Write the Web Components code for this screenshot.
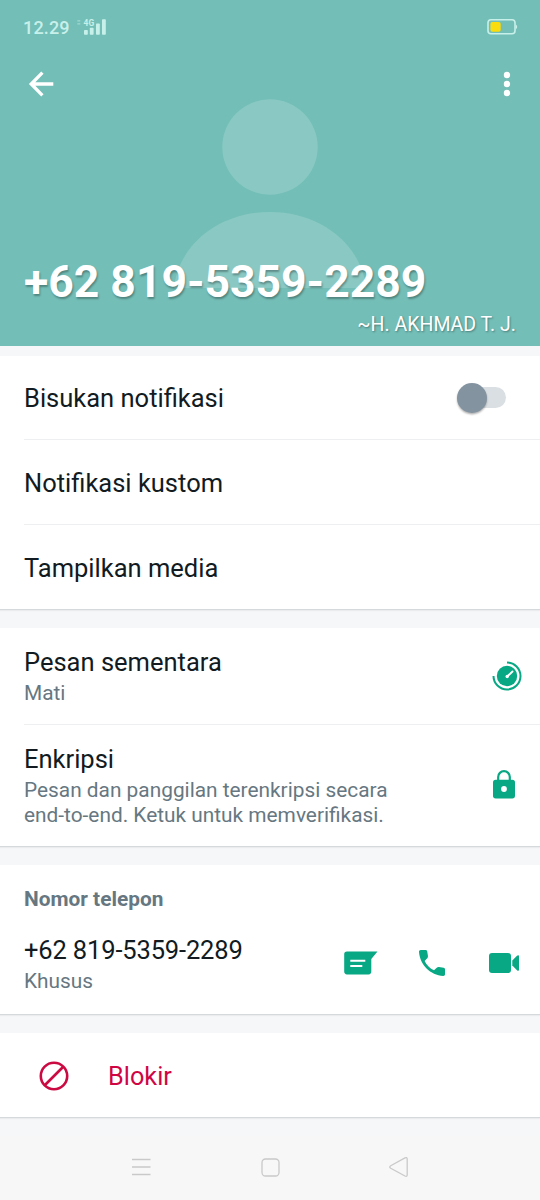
<!DOCTYPE html>
<html lang="id">
<head>
<meta charset="utf-8">
<title>Info kontak</title>
<style>
body{margin:0;background:#f6f7f9;font-family:Roboto,"Liberation Sans",sans-serif;color:#111b21}
</style>
</head>
<body>
<contact-screen></contact-screen>
<script>
const define = (name, css, html) => customElements.define(name, class extends HTMLElement {
  constructor() {
    super();
    this.attachShadow({mode: 'open'}).innerHTML = `<style>*{box-sizing:border-box}svg{display:block;overflow:visible}${css}</style>${html}`;
  }
});

define('status-bar', `
:host{display:flex;height:54px;padding:0 22px 0 23px;align-items:center;color:#c8f0ea}
.time{font-size:18px;font-weight:500;line-height:22px;letter-spacing:.15px;width:54px;padding-top:1px}
.net{flex:1}`,
`<span class="time">12.29</span>
<svg class="net" width="30" height="20" viewBox="0 0 30 20" preserveAspectRatio="xMinYMid meet" fill="#c8f0ea">
<g opacity=".4"><rect x=".3" y="3" width="3" height="1.600"/><rect x=".3" y="6" width="3" height="1.600"/></g>
<rect x="7" y="13" width="3.800" height="4.700" rx=".8"/><rect x="12.800" y="10.800" width="3.800" height="6.900" rx=".8"/><rect x="19" y="6.500" width="3.800" height="11.200" rx=".8"/><rect x="25" y="2.300" width="3.800" height="15.400" rx=".8"/>
<text x="6.600" y="8.800" font-size="8.500" font-weight="700" textLength="10.500" lengthAdjust="spacingAndGlyphs">4G</text></svg>
<svg width="31" height="16" viewBox="0 0 31 16"><rect x="1" y=".8" width="27" height="14" rx="3" fill="none" stroke="#c8f0ea" stroke-width="1.600"/><path d="M28.700 5.300q3 2.700 0 5.200z" fill="#c8f0ea"/><rect x="3.400" y="3" width="10.300" height="9.800" rx="2" fill="#fbdc0c"/></svg>`);

define('contact-header', `
:host{display:grid;flex:none;height:346px;background:#73beb7;color:#fff;overflow:hidden}
.avatar,.content{grid-area:1/1}
.content{display:flex;flex-direction:column;z-index:1}
.bar{display:flex;justify-content:space-between;padding:17px 29px 0 29px;height:60px}
.grow{flex:1}
h1{margin:0 0 0 24px;font-size:44.500px;line-height:54px;font-weight:700;text-shadow:1px 1.500px 2px rgba(0,0,0,.3);white-space:nowrap}
p{margin:4px 24px 9px;text-align:right;font-size:19.500px;line-height:24px;text-shadow:1px 1px 2px rgba(0,0,0,.35)}`,
`<svg class="avatar" width="540" height="346" viewBox="0 0 540 346" fill="#8ac9c3"><circle cx="270" cy="147" r="47.700"/><path d="M174 288C178 246 218 212 270 212S362 246 366 288Z"/></svg>
<div class="content"><status-bar></status-bar>
<div class="bar">
<svg width="25" height="26" viewBox="0 0 25 26" fill="none" stroke="#fff" stroke-width="3.300"><path d="M24.300 13H3M13.400 1.700L2.200 13l11.200 11.300"/></svg>
<svg width="8" height="26" viewBox="0 0 8 26" fill="#fff"><circle cx="4" cy="4" r="3.200"/><circle cx="4" cy="13" r="3.200"/><circle cx="4" cy="22" r="3.200"/></svg></div>
<div class="grow"></div><h1>+62 819-5359-2289</h1><p>~H. AKHMAD T. J.</p></div>`);

define('info-card', `
:host{display:block;flex:none;background:#fff;border-bottom:1px solid #d6d9dc;box-shadow:0 1px 1px #eaecee;margin-bottom:18px}`, `<slot></slot>`);

define('info-row', `
:host{display:flex;box-sizing:border-box;align-items:center;height:var(--h,84px);margin-left:24px;padding:0 var(--pr,17px) var(--pb,0px) 0;border-bottom:var(--line,0) solid #eeeff0}
.text{flex:1;padding-top:var(--shift,1px)}
.title{font-size:25.500px;line-height:30px;white-space:nowrap;letter-spacing:var(--track,0)}
::slotted([slot=sub]){display:block;font-size:20.850px;line-height:25px;color:#667781;margin-top:4px;white-space:nowrap}`,
`<div class="text"><div class="title"><slot></slot></div><slot name="sub"></slot></div><slot name="end"></slot>`);

define('toggle-switch', `
:host{display:flex;align-items:center;width:50px;height:32px;margin-right:16px}
.track{width:42px;height:21px;border-radius:11px;background:#d9dfe3;margin-left:7px;display:flex;align-items:center}
.thumb{flex:none;width:30px;height:30px;margin-left:-7px;border-radius:50%;background:#8493a0;box-shadow:0 1.500px 2px rgba(0,0,0,.3)}`,
`<div class="track"><div class="thumb"></div></div>`);

const icons = {
timer: `<svg width="30" height="30" viewBox="0 0 30 30"><path d="M15 1.500A13.500 13.500 0 1 1 1.500 15" fill="none" stroke="#08a884" stroke-width="2"/><circle cx="15" cy="15" r="10.200" fill="#08a884"/><path d="M15.500 15.200L20.500 10.500" stroke="#fff" stroke-width="1.900" stroke-linecap="round"/><circle cx="15.200" cy="15.500" r="1.700" fill="#fff"/></svg>`,
lock: `<svg width="22" height="29" viewBox="0 0 22 29"><path d="M5.200 11V7a5.800 5.800 0 0 1 11.600 0v4" fill="none" stroke="#08a884" stroke-width="2.200"/><rect y="9.800" width="22" height="18.700" rx="2.700" fill="#08a884"/><circle cx="11" cy="19" r="2.900" fill="#fff"/></svg>`,
chat: `<svg width="34" height="24" viewBox="0 0 34 24"><path d="M3 .5H33.500L27.300 8V20.600a2.800 2.800 0 0 1-2.800 2.800H3A2.800 2.800 0 0 1 .2 20.600V3.300A2.800 2.800 0 0 1 3 .5Z" fill="#08a884"/><path d="M6.300 9.700H21.300M6.300 15H18.300" stroke="#fff" stroke-width="2"/></svg>`,
call: `<svg width="26" height="26" viewBox="3 3 18 18"><path d="M20 15.300l-3.200-.5c-.6-.1-1.100.1-1.500.5l-1.900 1.800c-2.800-1.400-5.100-3.700-6.500-6.500l1.800-1.900c.4-.4.600-.9.500-1.500L8.700 4c-.1-.6-.6-1-1.200-1H4.200C3.500 3 3 3.500 3 4.200 3.600 13.200 10.800 20.400 19.800 21c.7 0 1.200-.5 1.200-1.200v-3.300c0-.6-.4-1.100-1-1.200z" fill="#08a884"/></svg>`,
video: `<svg width="30" height="20" viewBox="0 0 30 20" fill="#08a884"><rect width="22" height="20" rx="3"/><path d="M23.300 7.600L28 2.800c1-1 2-.6 2 .7v13c0 1.300-1 1.700-2 .7l-4.700-4.800z"/></svg>`,
block: `<svg width="30" height="30" viewBox="0 0 30 30" fill="none" stroke="#cb0a42" stroke-width="2.600"><circle cx="15" cy="15" r="13.200"/><path d="M5.500 24.500L24.500 5.500"/></svg>`
};
customElements.define('app-icon', class extends HTMLElement {
  constructor() {
    super();
    this.attachShadow({mode: 'open'}).innerHTML = `<style>:host{display:block}svg{display:block}</style>${icons[this.getAttribute('name')] || ''}`;
  }
});

define('section-label', `:host{display:block;box-sizing:border-box;height:45px;padding:22px 24px 0;font-size:20.850px;line-height:24px;font-weight:700;color:#667781}`, `<slot></slot>`);

define('phone-actions', `:host{display:flex;align-items:center;width:176px;padding-top:1px}
.call{margin-left:41px}.video{margin-left:44px}`,
`<app-icon name="chat"></app-icon><app-icon class="call" name="call"></app-icon><app-icon class="video" name="video"></app-icon>`);

define('block-action', `:host{display:flex;box-sizing:border-box;align-items:center;height:84px;padding:2px 0 0 39px;gap:39px;color:#d00644;font-size:25.300px;line-height:30px}
span{padding-top:2px}`,
`<app-icon name="block"></app-icon><span><slot></slot></span>`);

define('system-nav', `:host{display:flex;box-sizing:border-box;flex:none;align-items:center;justify-content:space-between;height:64px;padding:0 132px 2px 131px;background:#f7f7f7}`,
`<svg width="20" height="20" viewBox="0 0 20 20" fill="none" stroke="#c9c9c9" stroke-width="1.300"><path d="M1 2.500H19.500M1 10H19.500M1 17.500H19.500"/></svg>
<svg width="19" height="19" viewBox="0 0 19 19" fill="none" stroke="#c9c9c9" stroke-width="1.300"><rect x="1" y="1" width="17" height="17" rx="3.500"/></svg>
<svg width="19" height="20" viewBox="0 0 19 20" fill="none" stroke="#c9c9c9" stroke-width="1.300"><path d="M1.700 8.700L16 .9q2-1 2.200 1V18q-.2 2-2.200 1L1.700 11.200q-2-1.200 0-2.500z"/></svg>`);

define('contact-screen', `
:host{display:flex;flex-direction:column;width:540px;height:1200px;overflow:hidden;background:#f6f7f9}
contact-header{margin-bottom:10px}
.line{--line:1px;--h:85px}
.duration{--line:1px;--h:97px;--shift:0px;--pr:18px}
.encryption{--h:121px;--pr:25px;--shift:2px;--pb:2px}
.number{--h:104px;--pr:20px;--shift:5px;--track:-.15px}
.first{--h:84px}`,
`<contact-header></contact-header>
<info-card><info-row class="line first">Bisukan notifikasi<toggle-switch slot="end"></toggle-switch></info-row><info-row class="line">Notifikasi kustom</info-row><info-row>Tampilkan media</info-row></info-card>
<info-card><info-row class="duration">Pesan sementara<span slot="sub">Mati</span><app-icon slot="end" name="timer"></app-icon></info-row><info-row class="encryption">Enkripsi<span slot="sub">Pesan dan panggilan terenkripsi secara<br>end-to-end. Ketuk untuk memverifikasi.</span><app-icon slot="end" name="lock"></app-icon></info-row></info-card>
<info-card><section-label>Nomor telepon</section-label><info-row class="number">+62 819-5359-2289<span slot="sub">Khusus</span><phone-actions slot="end"></phone-actions></info-row></info-card>
<info-card><block-action>Blokir</block-action></info-card>
<system-nav></system-nav>`);
</script>
</body>
</html>
